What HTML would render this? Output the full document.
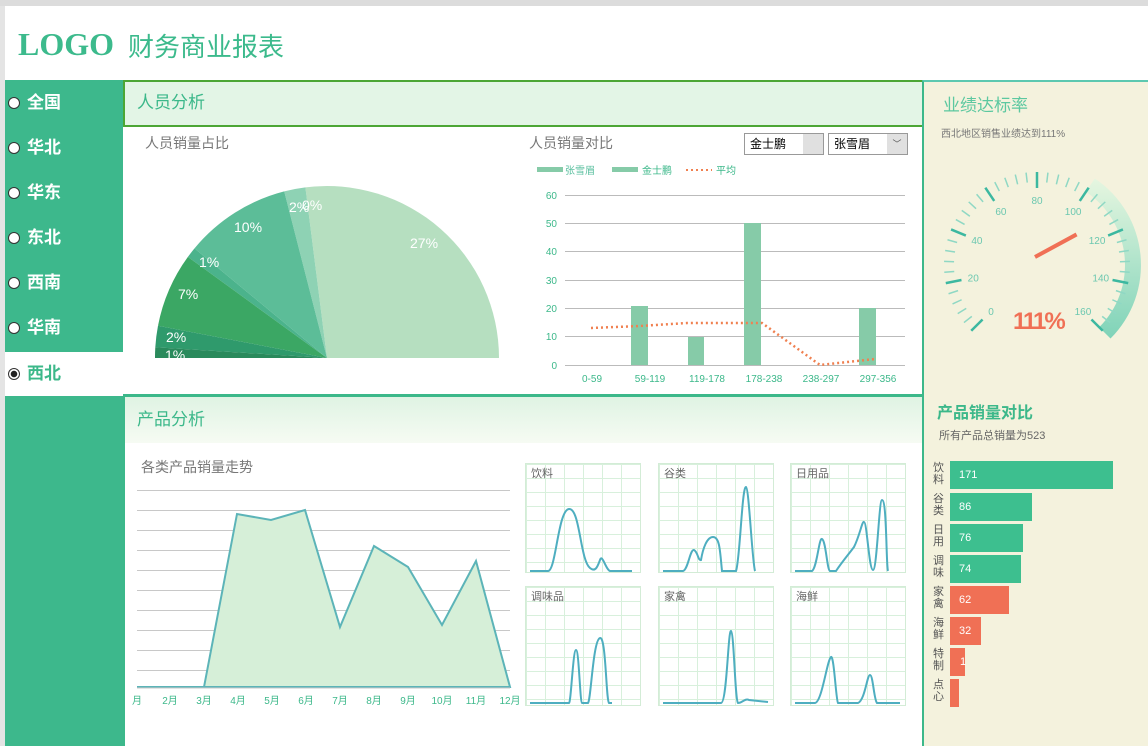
<!DOCTYPE html>
<html><head><meta charset="utf-8"><style>
*{margin:0;padding:0;box-sizing:border-box}
body{width:1148px;height:746px;overflow:hidden;background:#fff;font-family:"Liberation Sans","Noto Sans CJK SC",sans-serif;position:relative}
.a{position:absolute}
.side div.it{position:absolute;left:0;width:118px;height:44px;color:#fff;font-weight:bold;font-size:17px;line-height:44px;padding-left:22px}
.side .r{position:absolute;left:3px;top:16px;width:12px;height:12px;border-radius:50%;background:#fff;border:1px solid #333}
.mini{position:absolute;width:116px;height:110px;border:1px solid #d3ecd6;background-color:#fff;background-image:linear-gradient(#d8f0dc 1px,transparent 1px),linear-gradient(90deg,#d8f0dc 1px,transparent 1px);background-size:19px 14px}
.mini span{position:absolute;left:5px;top:1px;font-size:11px;color:#666}
.hb{position:absolute;left:950px;height:28px;color:#fff;font-size:11px;line-height:28px;padding-left:9px}
.hl{position:absolute;left:933px;width:12px;font-size:11px;line-height:12px;color:#555}
</style></head><body>
<div class="a" style="left:0;top:0;width:1148px;height:6px;background:#dcdcdc"></div>
<div class="a" style="left:0;top:6px;width:5px;height:740px;background:#e4e4e4"></div>
<div class="a" style="left:18px;top:26px;font-family:'Liberation Serif',serif;font-size:32px;font-weight:bold;color:#3cba8c;letter-spacing:0">LOGO</div>
<div class="a" style="left:128px;top:27px;font-size:26px;color:#3cba8c">财务商业报表</div>

<div class="a side" style="left:5px;top:80px;width:118px;height:666px;background:#3db88c">
<div class="it" style="top:1px"><i class="r"></i>全国</div>
<div class="it" style="top:46px"><i class="r"></i>华北</div>
<div class="it" style="top:91px"><i class="r"></i>华东</div>
<div class="it" style="top:136px"><i class="r"></i>东北</div>
<div class="it" style="top:181px"><i class="r"></i>西南</div>
<div class="it" style="top:226px"><i class="r"></i>华南</div>
<div class="it" style="top:272px;background:#fff;color:#3cb88a"><i class="r" style="background:radial-gradient(#222 3px,#fff 3.5px)"></i>西北</div>
</div>

<div class="a" style="left:123px;top:80px;width:799px;height:47px;background:#e3f5e6;border:2px solid #4ca635;border-right:none"></div>
<div class="a" style="left:137px;top:88px;font-size:17px;color:#3cb88a">人员分析</div>
<div class="a" style="left:145px;top:133px;font-size:14px;color:#777">人员销量占比</div>

<svg class="a" style="left:0;top:0" width="1148" height="746">
<g stroke="none">
<path d="M327 358 L499 358 A172 172 0 0 0 305.4 187.4Z" fill="#b6dfc0"/>
<path d="M327 358 L305.4 187.4 A172 172 0 0 0 284.2 191.4Z" fill="#8ed2b4"/>
<path d="M327 358 L284.2 191.4 A172 172 0 0 0 194.5 248.4Z" fill="#5cbd98"/>
<path d="M327 358 L194.5 248.4 A172 172 0 0 0 187.9 256.9Z" fill="#4bb38c"/>
<path d="M327 358 L187.9 256.9 A172 172 0 0 0 158 325.8Z" fill="#3ba764"/>
<path d="M327 358 L158 325.8 A172 172 0 0 0 155.3 347.2Z" fill="#2f9a6c"/>
<path d="M327 358 L155.3 347.2 A172 172 0 0 0 155 358Z" fill="#2a8a5c"/>
</g>
<g fill="#fff" font-size="14" font-family="Liberation Sans">
<text x="410" y="248">27%</text><text x="289" y="212">2%</text><text x="302" y="210">0%</text>
<text x="234" y="232">10%</text><text x="199" y="267">1%</text><text x="178" y="299">7%</text>
<text x="166" y="342">2%</text><text x="165" y="360">1%</text></g>
</svg>

<div class="a" style="left:529px;top:133px;font-size:14px;color:#777">人员销量对比</div>
<div class="a" style="left:744px;top:133px;width:80px;height:22px;border:1px solid #999;background:#fff;font-size:12px;line-height:20px;padding-left:5px">金士鹏<span style="position:absolute;right:0;top:0;width:20px;height:20px;background:#e0e0e0"></span></div>
<div class="a" style="left:828px;top:133px;width:80px;height:22px;border:1px solid #999;background:#fff;font-size:12px;line-height:20px;padding-left:5px">张雪眉<span style="position:absolute;right:0;top:0;width:20px;height:20px;background:#e0e0e0;text-align:center;font-size:9px;color:#555">﹀</span></div>

<svg class="a" style="left:0;top:0" width="1148" height="746" font-family="Liberation Sans">
<rect x="537" y="167" width="26" height="5" fill="#86cba8"/><text x="565" y="174" font-size="10" fill="#5cc0a0">张雪眉</text>
<rect x="612" y="167" width="26" height="5" fill="#86cba8"/><text x="642" y="174" font-size="10" fill="#3cb88a">金士鹏</text>
<line x1="686" y1="170" x2="712" y2="170" stroke="#f08050" stroke-width="2" stroke-dasharray="2 3"/><text x="716" y="174" font-size="10" fill="#3cb88a">平均</text>
<g stroke="#bbb" stroke-width="1">
<line x1="565" y1="195.5" x2="905" y2="195.5"/><line x1="565" y1="223.5" x2="905" y2="223.5"/><line x1="565" y1="251.5" x2="905" y2="251.5"/><line x1="565" y1="280.5" x2="905" y2="280.5"/><line x1="565" y1="308.5" x2="905" y2="308.5"/><line x1="565" y1="336.5" x2="905" y2="336.5"/><line x1="565" y1="365.5" x2="905" y2="365.5"/></g>
<g font-size="10" fill="#3cb88a" text-anchor="end">
<text x="557" y="199">60</text><text x="557" y="227">50</text><text x="557" y="255">40</text><text x="557" y="284">30</text><text x="557" y="312">20</text><text x="557" y="340">10</text><text x="557" y="369">0</text></g>
<g fill="#86cba8"><rect x="631" y="306" width="17" height="59"/><rect x="688" y="337" width="16" height="28"/><rect x="744" y="223" width="17" height="142"/><rect x="859" y="308" width="17" height="57"/></g>
<polyline points="591,328 640,326 687,323 762,323 820,365 875,359" fill="none" stroke="#f08050" stroke-width="2.5" stroke-dasharray="2 3"/>
<g font-size="10" fill="#3cb88a" text-anchor="middle">
<text x="592" y="382">0-59</text><text x="650" y="382">59-119</text><text x="707" y="382">119-178</text><text x="764" y="382">178-238</text><text x="821" y="382">238-297</text><text x="878" y="382">297-356</text></g>
</svg>

<div class="a" style="left:123px;top:394px;width:799px;height:3px;background:#3cb88a"></div>
<div class="a" style="left:123px;top:397px;width:799px;height:46px;background:linear-gradient(#dff3e3,#f6fbf3)"></div>
<div class="a" style="left:123px;top:394px;width:2px;height:352px;background:#3cb88a"></div>
<div class="a" style="left:137px;top:405px;font-size:17px;color:#3cb88a">产品分析</div>
<div class="a" style="left:141px;top:457px;font-size:14px;color:#777">各类产品销量走势</div>

<svg class="a" style="left:0;top:0" width="1148" height="746" font-family="Liberation Sans">
<g stroke="#c8c8c8"><line x1="137" y1="490.5" x2="510" y2="490.5"/><line x1="137" y1="510.5" x2="510" y2="510.5"/><line x1="137" y1="530.5" x2="510" y2="530.5"/><line x1="137" y1="550.5" x2="510" y2="550.5"/><line x1="137" y1="570.5" x2="510" y2="570.5"/><line x1="137" y1="590.5" x2="510" y2="590.5"/><line x1="137" y1="610.5" x2="510" y2="610.5"/><line x1="137" y1="630.5" x2="510" y2="630.5"/><line x1="137" y1="650.5" x2="510" y2="650.5"/><line x1="137" y1="670.5" x2="510" y2="670.5"/></g>
<polygon points="137,687 204,687 237,514 271,520 305,510 340,627 374,546 408,567 442,625 476,561 510,687" fill="#d6efd8" stroke="#5cb4b8" stroke-width="2"/>
<line x1="137" y1="688" x2="510" y2="688" stroke="#c8c8c8"/>
<g font-size="10" fill="#3cb88a" text-anchor="middle"><text x="137" y="704">月</text><text x="170" y="704">2月</text><text x="204" y="704">3月</text><text x="238" y="704">4月</text><text x="272" y="704">5月</text><text x="306" y="704">6月</text><text x="340" y="704">7月</text><text x="374" y="704">8月</text><text x="408" y="704">9月</text><text x="442" y="704">10月</text><text x="476" y="704">11月</text><text x="510" y="704">12月</text></g>
</svg>

<div class="mini" style="left:525px;top:463px"><span>饮料</span></div>
<div class="mini" style="left:658px;top:463px"><span>谷类</span></div>
<div class="mini" style="left:790px;top:463px"><span>日用品</span></div>
<div class="mini" style="left:525px;top:586px;height:120px"><span>调味品</span></div>
<div class="mini" style="left:658px;top:586px;height:120px"><span>家禽</span></div>
<div class="mini" style="left:790px;top:586px;height:120px"><span>海鲜</span></div>
<svg class="a" style="left:0;top:0" width="1148" height="746">
<g fill="none" stroke="#4eaec0" stroke-width="2">
<path d="M530 571 L548 571 C556 571 558 510 569 509 C580 508 580 560 590 568 C596 573 598 565 600 560 C602 553 606 570 610 571 L632 571"/>
<path d="M663 571 L683 571 C688 570 690 549 694 550 C698 552 698 561 701 560 C703 548 707 537 713 537 C720 537 720 552 722 571 L736 571 C740 560 742 486 746 487 C749 488 752 560 755 571"/>
<path d="M795 571 L812 571 C817 568 819 537 822 539 C826 541 827 570 830 571 L836 571 C842 562 848 555 854 547 C860 535 862 521 864 522 C867 522 869 570 873 570 C877 570 879 500 882 500 C887 500 886 565 888 571"/>
<path d="M530 703 L569 703 C571 703 573 650 576 650 C579 650 580 702 582 703 L588 703 C591 700 593 640 600 638 C606 636 606 700 609 703 L612 703"/>
<path d="M663 703 L721 703 C727 703 728 630 731 631 C734 632 735 700 738 703 C742 703 745 698 749 700 L768 702"/>
<path d="M795 703 L815 703 C822 702 827 660 831 657 C834 655 836 700 838 703 L858 703 C865 700 867 675 870 675 C873 675 874 700 877 703 L900 703"/>
</g></svg>

<div class="a" style="left:922px;top:80px;width:226px;height:666px;background:#f4f2dd;border-left:2px solid #3cb88a;border-top:2px solid #5cc8b0"></div>
<div class="a" style="left:943px;top:91px;font-size:17px;color:#5cc8a0">业绩达标率</div>
<div class="a" style="left:941px;top:125px;font-size:10px;color:#777">西北地区销售业绩达到111%</div>
<svg class="a" style="left:922px;top:80px" width="226" height="300" id="g">
<defs><linearGradient id="gr" x1="0" y1="0" x2="0" y2="1"><stop offset="0" stop-color="#e6f6e0"/><stop offset="1" stop-color="#7fd3b8"/></linearGradient></defs>
</svg>
<div class="a" style="left:1013px;top:308px;font-size:24px;font-weight:bold;color:#f07055;letter-spacing:-2px">111%</div>

<div class="a" style="left:937px;top:399px;font-size:16px;font-weight:bold;color:#3cb88a">产品销量对比</div>
<div class="a" style="left:939px;top:427px;font-size:11px;color:#666">所有产品总销量为523</div>
<div class="hb" style="top:461px;width:163px;background:#3dbf8f">171</div>
<div class="hb" style="top:493px;width:82px;background:#3dbf8f">86</div>
<div class="hb" style="top:524px;width:73px;background:#3dbf8f">76</div>
<div class="hb" style="top:555px;width:71px;background:#3dbf8f">74</div>
<div class="hb" style="top:586px;width:59px;background:#f07055">62</div>
<div class="hb" style="top:617px;width:31px;background:#f07055">32</div>
<div class="hb" style="top:648px;width:15px;background:#f07055;padding-left:10px">1</div>
<div class="hb" style="top:679px;width:7px;background:#f07055"></div>
<div class="hl" style="top:462px">饮<br>料</div><div class="hl" style="top:493px">谷<br>类</div><div class="hl" style="top:524px">日<br>用</div><div class="hl" style="top:555px">调<br>味</div><div class="hl" style="top:586px">家<br>禽</div><div class="hl" style="top:617px">海<br>鲜</div><div class="hl" style="top:648px">特<br>制</div><div class="hl" style="top:679px">点<br>心</div>

<script>
(function(){
var s=document.getElementById('g'),ns='http://www.w3.org/2000/svg',cx=115,cy=185,R=93;
function el(t,a){var e=document.createElementNS(ns,t);for(var k in a)e.setAttribute(k,a[k]);s.appendChild(e);return e;}
function ang(v){return (225-v*270/160)*Math.PI/180;}
var a1=ang(100),a2=ang(160),r1=88,r2=104;
function p(r,a){return (cx+r*Math.cos(a)).toFixed(1)+' '+(cy-r*Math.sin(a)).toFixed(1);}
el('path',{d:'M'+p(r2,a1)+' A'+r2+' '+r2+' 0 0 1 '+p(r2,a2)+' L'+p(r1,a2)+' A'+r1+' '+r1+' 0 0 0 '+p(r1,a1)+'Z',fill:'url(#gr)'});
for(var v=0;v<=160;v+=4){var a=ang(v),maj=v%20==0,ri=maj?R-16:R-10;
el('line',{x1:cx+ri*Math.cos(a),y1:cy-ri*Math.sin(a),x2:cx+R*Math.cos(a),y2:cy-R*Math.sin(a),stroke:maj?'#3cb8a0':'#8fd8c4','stroke-width':maj?2.5:1.5});
if(maj){var rt=R-28,t=el('text',{x:cx+rt*Math.cos(a),y:cy-rt*Math.sin(a)+4,'font-size':10,fill:'#6cc8b0','text-anchor':'middle','font-family':'Liberation Sans'});t.textContent=v;}}
var an=ang(111);
el('line',{x1:cx-2,y1:cy-8,x2:cx+50*Math.cos(an),y2:cy-50*Math.sin(an),stroke:'#f07055','stroke-width':4});
})();
</script>
</body></html>
